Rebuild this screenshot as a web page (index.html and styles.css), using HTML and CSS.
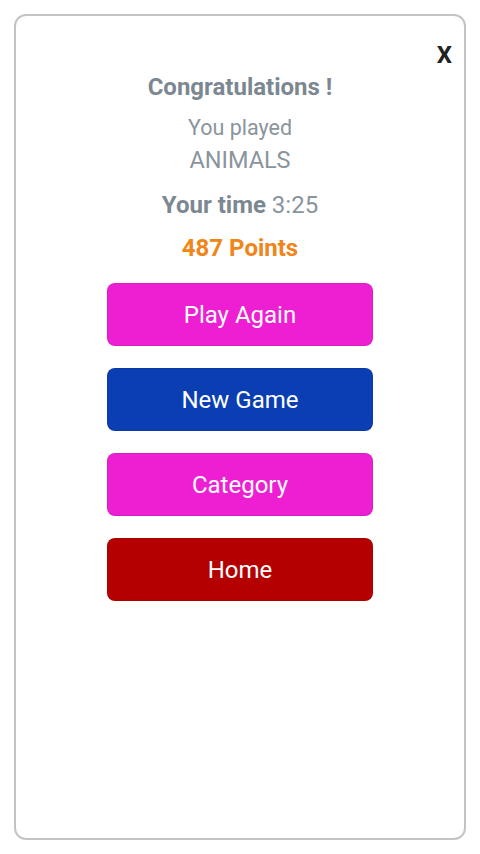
FILE: index.html
```html
<!DOCTYPE html>
<html lang="en">
<head>
    <meta charset="UTF-8">
    <meta name="viewport" content="width=device-width, initial-scale=1.0">
    <title>Game Over</title>
    <link rel="stylesheet" href="styles.css">
</head>
<body>

    <div class="card">
        <div class="close-row">
            <span class="close">X</span>
        </div>
        <div class="summary">
            <h1 class="title">Congratulations !</h1>
            <div class="played">
                <div>You played</div>
                <div class="category-name">ANIMALS</div>
            </div>
            <div class="time"><strong>Your time</strong> 3:25</div>
            <div class="points">487 Points</div>
        </div>
        <div class="actions">
            <button class="btn btn-pink">Play Again</button>
            <button class="btn btn-blue">New Game</button>
            <button class="btn btn-pink">Category</button>
            <button class="btn btn-red">Home</button>
        </div>
    </div>

</body>
</html>
```

FILE: styles.css
```css
body {
    font-family: Roboto, "Liberation Sans", sans-serif;
    background-color: #ffffff;
    margin: 0;
    padding: 14px;
    height: 854px;
    box-sizing: border-box;
}

.card {
    height: 826px;
    box-sizing: border-box;
    border: 2px solid #c4c4c4;
    border-radius: 12px;
    padding: 28px 12px 0 12px;
}

.close-row {
    display: flex;
    justify-content: flex-end;
}

.close {
    font-size: 24px;
    font-weight: bold;
    color: #222;
    line-height: 22px;
}

.summary {
    text-align: center;
    color: #8a949c;
}

.title {
    font-size: 24px;
    font-weight: bold;
    color: #7b8892;
    margin: 7px 0 0 0;
    line-height: 28px;
}

.played {
    margin-top: 11px;
    font-size: 21.5px;
    line-height: 32px;
}

.category-name {
    font-size: 23.5px;
}

.time {
    margin-top: 15px;
    font-size: 24px;
    line-height: 28px;
}

.time strong {
    color: #7b8892;
}

.points {
    margin-top: 15px;
    font-size: 24px;
    font-weight: bold;
    color: #f08519;
    line-height: 28px;
}

.actions {
    display: flex;
    flex-direction: column;
    align-items: center;
    gap: 22px;
    margin-top: 21px;
}

.btn {
    width: 266px;
    height: 63px;
    border: 1px solid rgba(0, 0, 0, 0.08);
    border-radius: 8px;
    color: #ffffff;
    font-family: Roboto, "Liberation Sans", sans-serif;
    font-size: 24px;
}

.btn-pink {
    background-color: #ee1fd3;
}

.btn-blue {
    background-color: #0a3eb2;
}

.btn-red {
    background-color: #b50000;
}
```
